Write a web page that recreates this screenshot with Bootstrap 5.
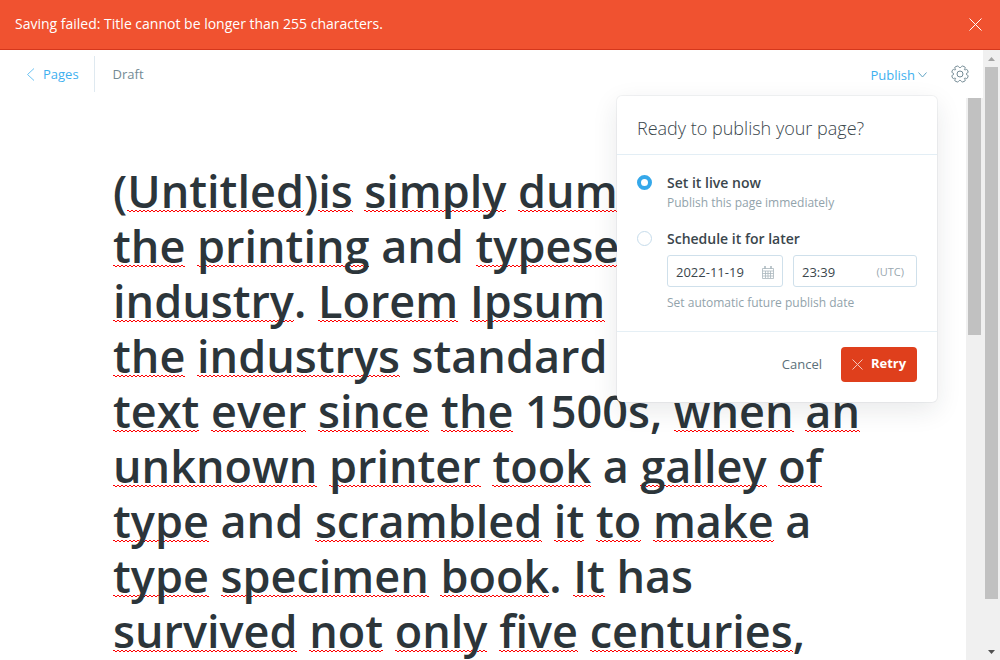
<!DOCTYPE html>
<html lang="en">
<head>
<meta charset="utf-8">
<meta name="viewport" content="width=device-width, initial-scale=1">
<title>Page editor</title>
<link rel="stylesheet" href="https://cdn.jsdelivr.net/npm/bootstrap@5.3.0/dist/css/bootstrap.min.css">
<style>
  body { font-family: "Open Sans", "Noto Sans", sans-serif; font-size: 13px; line-height: 20px; color: #3a464c; }
  .line-icon { display: block; fill: none; stroke: currentColor; flex: none; }
  .alert-bar { background: #f05230; border-bottom: 1px solid #d4371c; height: 50px; color: #fff; font-size: 14px; padding: 0 18px 1px 15px; }
  .icon-btn { background: none; border: 0; padding: 0; color: inherit; }
  .topbar { height: 48px; padding: 0 14px 0 26px; }
  .link-blue { color: #3eb0ef; text-decoration: none; }
  .crumb { border-right: 1px solid #dfe9f0; height: 36px; padding-right: 15px; }
  .status { color: #738a94; padding-left: 18px; }
  .publish-toggle { padding-top: 2px; gap: 3px; }
  .publish-toggle .line-icon { color: #62a5c5; }
  .gear { color: #738a94; }
  .editor { padding: 65px 112px 0 113px; }
  .page-title { font-size: 45px; line-height: 55px; font-weight: 600; color: #2c353a; margin: 0; white-space: nowrap; }
  .page-title u { text-decoration: none; background: url("data:image/svg+xml,%3Csvg xmlns='http://www.w3.org/2000/svg' width='4' height='2'%3E%3Cpath d='M0 0h2v1h2v1H2V1H0z' fill='red'/%3E%3C/svg%3E") repeat-x left bottom 9px; }
  .sb { width: 17px; background: #f0f0f0; flex: none; }
  .sb-arrow { height: 17px; flex: none; }
  .thumb { background: #c1c1c1; margin: 0 2px; }
  .publish-menu { position: absolute; top: 46px; right: 46px; width: 320px; background: #fff; border-radius: 5px; box-shadow: 0 0 0 1px rgba(99,114,130,.08), 0 8px 26px rgba(27,39,51,.1); z-index: 5; }
  .publish-menu header { height: 59px; padding: 5px 20px 0; border-bottom: 1px solid #e3eef5; }
  .publish-menu h2 { font-size: 18px; line-height: 24px; font-weight: 300; margin: 0; }
  .publish-menu footer { border-top: 1px solid #e5eff5; height: 71px; padding: 0 20px 6px; }
  .choices { padding: 18px 20px; }
  .choices .form-check-input { width: 15px; height: 15px; margin: 2px 15px 0 0; border: 1px solid #c6dceb; background: #fff; flex: none; float: none; }
  .choices .form-check-input:checked { border: 4px solid #35a8ea; background: #fff; }
  .choices label { font-size: 14px; font-weight: 600; display: block; }
  .hint { color: #92a3ab; font-size: 12px; line-height: 20px; margin: 0; }
  .fields { margin: 6px 0; }
  .field { border: 1px solid #cfe0eb; border-radius: 3px; height: 32px; padding: 2px 8px 0; }
  .field input { border: 0; outline: 0; padding: 0; min-width: 0; width: 100%; color: #3a464c; font-size: 13px; background: none; }
  .field .line-icon { color: #a9b6bd; }
  .date { width: 116px; }
  .time { width: 124px; padding-right: 12px; }
  .zone { color: #9aa8b0; font-size: 11px; }
  .btn-cancel { color: #5b7079; margin-right: 19px; }
  .btn-retry, .btn-retry:hover { background: #df3f1c; color: #fff; font-size: 13px; font-weight: 700; height: 35px; width: 76px; border: 0; border-radius: 4px; padding: 0; }
</style>
</head>
<body class="vh-100 overflow-hidden d-flex flex-column bg-white">
<div class="alert-bar d-flex align-items-center justify-content-between flex-shrink-0" role="alert">
  <span>Saving failed: Title cannot be longer than 255 characters.</span>
  <button class="icon-btn" type="button" aria-label="Close"><svg class="line-icon" width="13" height="13" viewBox="0 0 13 13"><path d="M.5.5l12 12M12.500.5l-12 12"/></svg></button>
</div>
<div class="d-flex flex-grow-1 overflow-hidden">
  <div class="d-flex flex-column flex-grow-1 position-relative overflow-hidden">
    <nav class="topbar d-flex align-items-center flex-shrink-0" aria-label="Editor">
      <a href="#" class="link-blue crumb d-flex align-items-center gap-2"><svg class="line-icon" width="9" height="13" viewBox="0 0 9 13" opacity=".75"><path d="M8 .5l-6.500 6 6.500 6"/></svg>Pages</a>
      <span class="status">Draft</span>
      <button type="button" class="icon-btn link-blue publish-toggle ms-auto d-flex align-items-center me-4"><span>Publish</span><svg class="line-icon" width="9" height="6" viewBox="0 0 9 6"><path d="M.5.5l4 4.500 4-4.500"/></svg></button>
      <button type="button" class="icon-btn gear" aria-label="Settings"><svg class="line-icon" width="18" height="18" viewBox="0 0 18 18" stroke-linejoin="round"><circle cx="9" cy="9" r="3"/><path d="M9 2.700C10.300 2.700 10.200 1 11.500 1 12.500 1.200 13.600 1.800 14.200 2.300 14.900 3.300 12.900 4 13.500 4.700 14.200 5.500 15.300 3.800 16.200 4.700 16.700 5.400 17 6.400 17.200 7.100 17 8.200 15.300 7.700 15.300 9 15.300 10.300 17 9.800 17.200 10.900 17 11.600 16.700 12.600 16.200 13.300 15.300 14.200 14.200 12.500 13.500 13.300 12.900 14 14.900 14.700 14.200 15.700 13.600 16.200 12.500 16.800 11.500 17 10.200 17 10.300 15.300 9 15.300 7.700 15.300 7.800 17 6.500 17 5.500 16.800 4.400 16.200 3.800 15.700 3.100 14.700 5.100 14 4.500 13.300 3.800 12.500 2.700 14.200 1.800 13.300 1.300 12.600 1 11.600.8 10.900 1 9.800 2.700 10.300 2.700 9 2.700 7.700 1 8.200.8 7.100 1 6.400 1.300 5.400 1.800 4.700 2.700 3.800 3.800 5.500 4.500 4.700 5.100 4 3.100 3.300 3.800 2.300 4.400 1.800 5.500 1.200 6.500 1 7.800 1 7.700 2.700 9 2.700z"/></svg></button>
    </nav>
    <div class="d-flex flex-grow-1 overflow-hidden">
      <main class="editor flex-grow-1 overflow-hidden">
        <h1 class="page-title">(<u>Untitled</u>)<u>is</u> <u>simply</u> <u>dummy</u><br>
          <u>the</u> <u>printing</u> and <u>typesetting</u><br>
          <u>industry</u>. <u>Lorem</u> <u>Ipsum</u> <u>has</u><br>
          <u>the</u> <u>industrys</u> standard <u>dummy</u><br>
          <u>text</u> <u>ever</u> <u>since</u> <u>the</u> 1500s, <u>when</u> <u>an</u><br>
          <u>unknown</u> <u>printer</u> <u>took</u> a <u>galley</u> <u>of</u><br>
          <u>type</u> and <u>scrambled</u> <u>it</u> <u>to</u> <u>make</u> a<br>
          <u>type</u> <u>specimen</u> <u>book</u>. <u>It</u> has<br>
          <u>survived</u> <u>not</u> <u>only</u> <u>five</u> <u>centuries</u>,</h1>
      </main>
      <div class="sb" aria-hidden="true"><div class="thumb" style="height:42.2%"></div></div>
    </div>
    <form class="publish-menu">
      <header class="d-flex align-items-center"><h2>Ready to publish your page?</h2></header>
      <div class="choices">
        <div class="d-flex mb-3"><input class="form-check-input" type="radio" name="when" id="now" checked><div><label for="now">Set it live now</label><p class="hint">Publish this page immediately</p></div></div>
        <div class="d-flex"><input class="form-check-input" type="radio" name="when" id="later">
          <div class="flex-grow-1"><label for="later">Schedule it for later</label>
            <div class="fields d-flex justify-content-between">
              <div class="field date d-flex align-items-center"><input type="text" value="2022-11-19" aria-label="Publish date"><svg class="line-icon" width="12" height="13" viewBox="0 0 12 13" stroke-width=".8"><path d="M.5 2.500h11v10H.5zM.5 5h11M.5 7.500h11M.5 10h11M3.500 5v7M6 5v7M8.500 5v7"/><path d="M3 0v3M9 0v3" stroke-width="1.500"/></svg></div>
              <div class="field time d-flex align-items-center"><input type="text" value="23:39" aria-label="Publish time"><span class="zone">(UTC)</span></div>
            </div>
            <p class="hint">Set automatic future publish date</p>
          </div></div>
      </div>
      <footer class="d-flex align-items-center justify-content-end"><button type="button" class="icon-btn btn-cancel">Cancel</button><button type="submit" class="btn btn-retry d-flex align-items-center justify-content-center gap-2"><svg class="line-icon" width="11" height="11" viewBox="0 0 11 11" opacity=".7"><path d="M.5.5l10 10M10.500.5l-10 10"/></svg>Retry</button></footer>
    </form>
  </div>
  <div class="sb d-flex flex-column" aria-hidden="true">
    <div class="sb-arrow d-flex align-items-center justify-content-center"><svg width="7" height="4" class="d-block"><path d="M0 4 3.500 0 7 4z" fill="#a3a3a3"/></svg></div>
    <div class="flex-grow-1"><div class="thumb" style="height:92.4%"></div></div>
    <div class="sb-arrow d-flex align-items-center justify-content-center"><svg width="7" height="4" class="d-block"><path d="M0 0h7L3.500 4z" fill="#505050"/></svg></div>
  </div>
</div>
<script src="https://cdn.jsdelivr.net/npm/bootstrap@5.3.0/dist/js/bootstrap.bundle.min.js"></script>
</body>
</html>
